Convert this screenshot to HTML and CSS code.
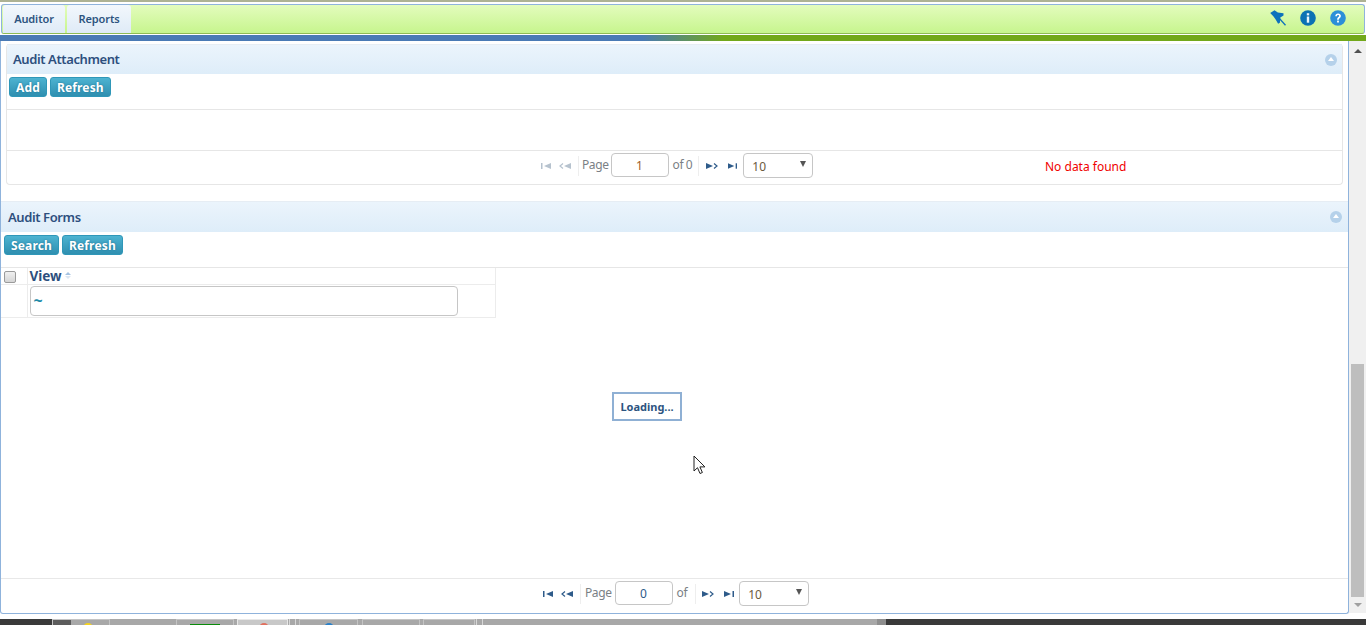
FILE: index.html
```html
<!DOCTYPE html>
<html lang="en">
<head>
<meta charset="utf-8">
<title>Auditor</title>
<link rel="stylesheet" href="styles.css">
</head>
<body>
<div class="topstrip"></div>
<nav class="navbar">
  <div class="tabs">
    <a class="tab tab-auditor">Auditor</a>
    <a class="tab tab-reports">Reports</a>
  </div>
  <div class="navicons">
    <svg class="navicon" viewBox="0 0 16 16"><path d="M4.500.2 7.800 2.600 13.500 3.200v2.400L10.300 7.500l-.4 5.200-1.800 1-2.600-4.500-2.200-3L.2 3z" fill="#0d72bc"/><path d="M8.500 7.500 15.500 15.300" fill="none" stroke="#0d72bc" stroke-width="1.300"/></svg>
    <svg class="navicon" viewBox="0 0 16 16"><circle cx="8" cy="8" r="7.800" fill="#0b72b4"/><rect x="6.800" y="6.500" width="2.400" height="6.200" fill="#e8f4fb"/><rect x="6.800" y="3.200" width="2.400" height="2.200" fill="#e8f4fb"/></svg>
    <svg class="navicon" viewBox="0 0 16 16"><circle cx="8" cy="8" r="7.800" fill="#2b8fd8"/><path d="M5.300 6.200C5.300 4.500 6.500 3.500 8.100 3.500s2.800.9 2.800 2.400c0 2.100-2.100 2.100-2.100 3.900H7.100c0-2.700 2-2.800 2-3.900 0-.6-.4-1-1-1-.7 0-1.100.5-1.100 1.300z" fill="#fff"/><rect x="7.100" y="10.600" width="1.800" height="1.900" fill="#fff"/></svg>
  </div>
</nav>
<div class="band"></div>
<div class="workspace">
  <main class="frame">
    <section class="panel panel-attach">
      <header class="panel-head"><h2>Audit Attachment</h2><span class="collapse"></span></header>
      <div class="toolbar"><button class="btn">Add</button><button class="btn">Refresh</button></div>
      <div class="empty-body"></div>
      <div class="pager pager-attach">
        <div class="pager-center">
          <span class="pg first muted"><svg viewBox="0 0 10 8"><rect x="0" y="1" width="1.500" height="6"/><path d="M10 1v6L3 4z"/></svg></span>
          <span class="pg prev muted"><svg viewBox="0 0 12 8"><path d="M12 1v6L5 4z"/><path class="chev" d="M4 1.500 1 4l3 2.500"/></svg></span>
          <span class="sep sep-a"></span>
          <span class="pg-label">Page</span>
          <input class="pg-input value-orange" value="1">
          <span class="pg-label">of 0</span>
          <span class="sep sep-b"></span>
          <span class="pg next"><svg viewBox="0 0 12 8"><path d="M0 1v6l7-3z"/><path class="chev" d="M8 1.500 11 4 8 6.500"/></svg></span>
          <span class="pg last"><svg viewBox="0 0 10 8"><path d="M0 1v6l7-3z"/><rect x="8.500" y="1" width="1.500" height="6"/></svg></span>
          <div class="pg-select"><span>10</span><i></i></div>
        </div>
        <span class="nodata">No data found</span>
      </div>
    </section>
    <section class="panel-forms">
      <header class="panel-head"><h2>Audit Forms</h2><span class="collapse"></span></header>
      <div class="toolbar"><button class="btn">Search</button><button class="btn">Refresh</button></div>
      <div class="grid-area">
        <table class="grid">
          <tr class="grid-head">
            <th class="cb-cell"><span class="checkbox"></span></th>
            <th class="view-cell">View <span class="sort"><i></i><i></i></span></th>
          </tr>
          <tr class="grid-filter">
            <td class="cb-cell"></td>
            <td class="filter-cell"><div class="filter-input">~</div></td>
          </tr>
        </table>
      </div>
      <div class="pager pager-forms">
        <div class="pager-center">
          <span class="pg first"><svg viewBox="0 0 10 8"><rect x="0" y="1" width="1.500" height="6"/><path d="M10 1v6L3 4z"/></svg></span>
          <span class="pg prev"><svg viewBox="0 0 12 8"><path d="M12 1v6L5 4z"/><path class="chev" d="M4 1.500 1 4l3 2.500"/></svg></span>
          <span class="sep sep-a"></span>
          <span class="pg-label">Page</span>
          <input class="pg-input value-blue" value="0">
          <span class="pg-label">of</span>
          <span class="sep sep-b"></span>
          <span class="pg next"><svg viewBox="0 0 12 8"><path d="M0 1v6l7-3z"/><path class="chev" d="M8 1.500 11 4 8 6.500"/></svg></span>
          <span class="pg last"><svg viewBox="0 0 10 8"><path d="M0 1v6l7-3z"/><rect x="8.500" y="1" width="1.500" height="6"/></svg></span>
          <div class="pg-select"><span>10</span><i></i></div>
        </div>
      </div>
    </section>
  </main>
  <aside class="scrollbar">
    <span class="arrow-up"></span>
    <div class="thumb"></div>
    <span class="arrow-down"></span>
  </aside>
</div>
<footer class="taskbar">
  <span class="tb-dark"></span>
  <span class="tb-group">
    <span class="tb-item w1"><b class="dot yellow"></b></span>
    <span class="tb-item w2"><b class="bar green"></b></span>
    <span class="tb-item w3"><b class="dot red"></b></span>
    <span class="tb-tick"></span>
    <span class="tb-item w4"><b class="dot blue"></b></span>
    <span class="tb-item w5"></span>
    <span class="tb-item w6"></span>
    <span class="tb-tick"></span>
    <span class="tb-end"></span>
  </span>
</footer>
<div class="loading">Loading...</div>
<svg class="cursor" viewBox="0 0 14 20"><path d="M1 1v15l3.500-3.300 2.500 5.800 2.400-1-2.500-5.600h5z" fill="#fff" stroke="#222" stroke-width="1"/></svg>
</body>
</html>
```
FILE: styles.css
```css
* { box-sizing: border-box; }
html, body { margin: 0; height: 625px; overflow: hidden; }
body {
  display: flex; flex-direction: column; background: #fff;
  font-family: "Noto Sans", "Open Sans", sans-serif; color: #2b4f7e; position: relative;
}
.topstrip { height: 2px; background: #adb294; flex: none; }
.navbar {
  height: 30px; flex: none; margin: 2px 1px 1px 1px; display: flex; justify-content: space-between; align-items: stretch;
  background: linear-gradient(#e3fcbd, #c7f58e); border: 1px solid #8fb3dc; border-bottom-color: #8fbb55; border-radius: 3px;
}
.tabs { display: flex; padding-left: 1px; gap: 2px; }
.tab {
  display: flex; align-items: center; justify-content: center; font-size: 11px; font-weight: 600; color: #2d5480;
  letter-spacing: -.1px; padding-bottom: 2px;
  background: linear-gradient(#f2f7fc, #dfebf7); border-radius: 3px 3px 0 0; height: 28px;
}
.tab-auditor { width: 62px; }
.tab-reports { width: 64px; }
.navicons { display: flex; align-items: center; gap: 14px; padding: 0 18px 2px 0; }
.navicon { width: 16px; height: 16px; display: block; }
.band { height: 6px; flex: none; background: linear-gradient(90deg, #4a7ab5 0%, #4a7ab5 47%, #72a81a 53%, #72a81a 100%); }
.workspace { flex: 1; display: flex; min-height: 0; }
.frame {
  width: 1349px; flex: none; display: flex; flex-direction: column; padding-top: 3px;
  border-left: 1px solid #8fb3dc; border-right: 1px solid #8fb3dc; border-bottom: 1px solid #8fb3dc;
  border-radius: 0 0 3px 3px; margin-bottom: 5px; background: #fff;
}
.panel-attach { margin: 0 5px 16px 5px; border: 1px solid #e6e6e6; border-top: 0; border-radius: 4px; height: 141px; display: flex; flex-direction: column; flex: none; }
.panel-head {
  height: 30px; flex: none; display: flex; align-items: center; justify-content: space-between;
  background: linear-gradient(#ebf4fc, #deedf9); padding: 0 5px 0 6px; border-top: 1px solid #e6edf4;
}
.panel-head h2 { margin: 0; font-size: 13px; font-weight: 600; color: #2d4f7e; letter-spacing: -.4px; }
.panel-attach h2 { margin-bottom: 2px; }
.panel-forms .panel-head { height: 31px; padding: 0 6px 0 7px; }
.collapse { width: 12px; height: 12px; border-radius: 50%; background: #b5d1ea; position: relative; display: block; }
.collapse::after { content: ""; position: absolute; left: 3px; top: 3px; border: 3px solid transparent; border-top: 0; border-bottom: 4px solid #fff; }
.toolbar { display: flex; gap: 3px; padding: 3px 2px; height: 35px; align-items: flex-start; flex: none; }
.panel-forms .toolbar { padding-left: 3px; }
.btn {
  height: 20px; padding: 0 6px; border: 1px solid #2f97b8; border-radius: 3px; font: 700 12px "Noto Sans", sans-serif; color: #fff;
  letter-spacing: .15px;
  background: linear-gradient(#4db3d1, #2f8fb0); text-shadow: 0 0 2px #1a6f8f;
}
.empty-body { height: 42px; border-top: 1px solid #e6e6e6; border-bottom: 1px solid #e6e6e6; flex: none; }
.pager { position: relative; flex: 1; }
.pager-center { display: flex; align-items: center; position: absolute; top: 2px; }
.pager-attach { height: 33px; }
.pager-attach .pager-center { left: 534px; }
.pg { height: 8px; display: flex; }
.pg svg { height: 8px; width: 100%; fill: #2e5b8a; display: block; }
.pg .chev { fill: none; stroke: #2e5b8a; stroke-width: 1.200; }
.pg.muted svg { fill: #b6c2ce; }
.pg.muted .chev { stroke: #b6c2ce; }
.first { width: 10px; margin-right: 8px; }
.prev { width: 12px; margin-right: 7px; }
.next { width: 12px; margin-right: 10px; }
.last { width: 9px; margin-right: 6px; }
.sep { width: 1px; height: 20px; background: #eeeeee; }
.sep-a { margin-right: 3px; }
.sep-b { margin: 0 7px 0 6px; }
.pg-label { font-size: 12px; color: #7a7f85; margin-top: -2px; letter-spacing: -.4px; }
.pg-input {
  width: 58px; height: 24px; border: 1px solid #c6c6c6; border-radius: 4px; text-align: center; align-self: flex-start;
  font: 12px "Noto Sans", sans-serif; padding: 0; margin: 0 4px 0 2px; background: #fff;
}
.value-orange { color: #a0622a; }
.value-blue { color: #2e5b8a; }
.pg-select { width: 70px; height: 25px; border: 1px solid #c6c6c6; border-radius: 4px; position: relative; display: flex; align-items: center; padding: 2px 0 0 8px; font-size: 12px; color: #6b5a3e; background: #fff; }
.pg-select i { position: absolute; right: 6px; top: 7px; border: 3px solid transparent; border-bottom: 0; border-top: 6px solid #555; }
.nodata { position: absolute; left: 1038px; top: 7px; font-size: 12px; color: #f00000; }
.panel-forms { flex: 1; display: flex; flex-direction: column; min-height: 0; }
.grid-area { flex: 1; border-top: 1px solid #e6e6e6; }
.grid { border-collapse: collapse; width: 495px; table-layout: fixed; }
.grid td, .grid th { padding: 0; border: 1px solid #ececec; border-top: 0; }
.cb-cell { width: 26px; border-left: 0 !important; }
.grid-head { height: 16px; }
.grid-head th { text-align: left; font-size: 13.500px; font-weight: 700; color: #2d4f7e; }
.view-cell { padding-left: 2px !important; line-height: 16px; }
.checkbox { display: block; width: 12px; height: 12px; margin: 2px 0 0 3px; border: 1px solid #9a9a9a; border-radius: 2px; background: linear-gradient(#f0f0f0, #d5d5d5); }
.sort { display: inline-block; vertical-align: 2px; width: 8px; }
.sort i { display: block; width: 0; border: 3.500px solid transparent; border-top: 0; border-bottom: 3px solid #a5c3e2; }
.sort i + i { border: 3.500px solid transparent; border-bottom: 0; border-top: 3px solid #dce6f1; margin-top: 1px; }
.grid-filter { height: 33px; }
.filter-cell { padding: 1px 0 0 2px !important; vertical-align: top; }
.filter-input { width: 428px; height: 30px; border: 1px solid #c6c6c6; border-radius: 4px; padding: 2px 0 0 3px; font-size: 16px; font-weight: 700; color: #1f8aa8; background: #fff; }
.pager-forms { height: 35px; flex: none; border-top: 1px solid #e8e8e8; }
.pager-forms .pager-center { left: 542px; }
.pager-forms .sep-a { margin-right: 4px; }
.pager-forms .sep-b { margin: 0 6px 0 8px; }
.pager-forms .pg-input { margin: 0 4px 0 3px; }
.pager-forms .last { width: 10px; margin-right: 5px; }
.scrollbar { width: 17px; flex: none; background: #f0f0f0; margin-bottom: 6px; display: flex; flex-direction: column; align-items: center; justify-content: flex-end; position: relative; }
.thumb { width: 13px; height: 233px; margin-bottom: 16px; background: #bebebe; flex: none; }
.arrow-up { position: absolute; top: 8px; border: 4px solid transparent; border-top: 0; border-bottom: 4px solid #505050; }
.arrow-down { position: absolute; bottom: 6px; border: 4px solid transparent; border-bottom: 0; border-top: 4px solid #a0a0a0; }
.taskbar { height: 6px; flex: none; display: flex; background: #3a3a3a; position: relative; overflow: hidden; }
.tb-dark { width: 52px; flex: none; }
.tb-group { width: 834px; background: #a8a8a8; display: flex; position: relative; }
.tb-item { display: block; border: 1px solid #c4c4c4; border-bottom: 0; height: 6px; position: relative; background: #a8a8a8; flex: none; }
.w1 { width: 58px; background: linear-gradient(90deg, #5c5c5c 0, #5c5c5c 18px, #a8a8a8 18px); }
.w2 { width: 58px; margin-left: 66px; }
.w3 { width: 51px; margin-left: 3px; background: #c8c8c8; border-color: #e8e8e8; }
.w4 { width: 59px; margin-left: 3px; }
.w5 { width: 58px; margin-left: 4px; }
.w6 { width: 52px; margin-left: 3px; }
.tb-tick { width: 7px; margin-left: 1px; flex: none; border-left: 1px solid #d8d8d8; border-right: 1px solid #d8d8d8; }
.tb-end { position: absolute; right: 0; width: 9px; height: 6px; background: #8e8e8e; }
.dot { position: absolute; top: 3px; left: 30px; width: 10px; height: 10px; border-radius: 50%; }
.yellow { background: #f4d21f; }
.red { background: #e0705f; left: 21px; }
.blue { background: #2a80c8; left: 24px; }
.bar { position: absolute; top: 4px; left: 13px; width: 30px; height: 2px; }
.green { background: #0a8a0a; }
.loading {
  position: absolute; left: 612px; top: 392px; width: 70px; height: 29px; border: 2px solid #8fb0d4; background: #fff;
  display: flex; align-items: center; justify-content: center; font-size: 11px; font-weight: 700; color: #2d5480;
}
.cursor { position: absolute; left: 693px; top: 455px; width: 14px; height: 20px; }
```
